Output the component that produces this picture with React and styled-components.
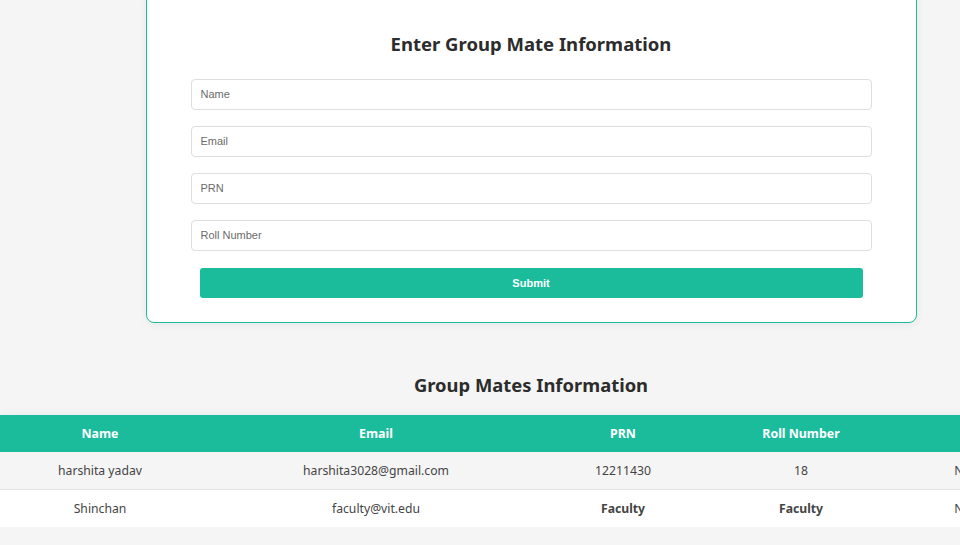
import React from "react";
import styled, { createGlobalStyle } from "styled-components";

const GlobalStyle = createGlobalStyle`
  html, body {
    margin: 0;
    padding: 0;
    background: #f5f5f5;
    overflow: hidden;
  }
  body {
    font-family: "Noto Sans", "Open Sans", sans-serif;
    color: #333;
  }
`;

const Page = styled.div`
  width: 1062px;
  margin-top: -10px;
  display: flex;
  flex-direction: column;
  align-items: center;
`;

const Card = styled.div`
  width: 771px;
  box-sizing: border-box;
  background: #fff;
  border: 1.5px solid #1abc9c;
  border-radius: 8px;
  box-shadow: 0 2px 8px rgba(0, 0, 0, 0.06);
  padding: 39px 44px 24px;
  display: flex;
  flex-direction: column;
  align-items: center;
`;

const Title = styled.h2`
  margin: 0 0 21px;
  font-size: 18.5px;
  font-weight: 700;
  color: #2c2c2c;
  line-height: 28px;
`;

const Form = styled.form`
  width: 100%;
  display: flex;
  flex-direction: column;
  gap: 16.5px;
`;

const Input = styled.input`
  height: 30.5px;
  box-sizing: border-box;
  width: 100%;
  border: 1px solid #dedede;
  border-radius: 4px;
  padding: 0 9px;
  font-family: "Liberation Sans", Arial, sans-serif;
  font-size: 11px;
  color: #333;
  background: #fff;
  outline: none;
  &::placeholder {
    color: #6b6b6b;
  }
`;

const Button = styled.button`
  margin: 1px 9px 0;
  height: 30px;
  border: none;
  border-radius: 3px;
  background: #1abc9c;
  color: #fff;
  font-family: "Liberation Sans", Arial, sans-serif;
  font-weight: 700;
  font-size: 11px;
  cursor: pointer;
`;

const SectionTitle = styled.h2`
  margin: 48px 0 16px;
  font-size: 18.4px;
  font-weight: 700;
  color: #2c2c2c;
  line-height: 28px;
`;

const Table = styled.table`
  width: 1062px;
  table-layout: fixed;
  border-collapse: collapse;
  box-shadow: 0 4px 12px rgba(0, 0, 0, 0.1);
`;

const Th = styled.th`
  background: #1abc9c;
  color: #fff;
  font-size: 12.4px;
  font-weight: 700;
  height: 37px;
  padding: 0 10px;
  text-align: center;
`;

const Row = styled.tr`
  background: ${(p) => (p.$alt ? "#f5f5f5" : "#fff")};
  border-bottom: 1px solid #e4e4e4;
  &:last-child {
    border-bottom: none;
  }
`;

const Td = styled.td`
  height: 37px;
  padding: 0 10px;
  text-align: center;
  font-size: 12.2px;
  color: #444;
  font-weight: ${(p) => (p.$bold ? 700 : 400)};
  white-space: nowrap;
`;

const columns = [
  { label: "Name", width: 200 },
  { label: "Email", width: 352 },
  { label: "PRN", width: 142 },
  { label: "Roll Number", width: 214 },
  { label: "Guide", width: 154 },
];

const mates = [
  { name: "harshita yadav", email: "harshita3028@gmail.com", prn: "12211430", roll: "18", guide: "Not Added" },
  { name: "Shinchan", email: "faculty@vit.edu", prn: "Faculty", roll: "Faculty", guide: "Not Added", faculty: true },
];

export default function App() {
  return (
    <>
      <GlobalStyle />
      <Page>
        <Card>
          <Title>Enter Group Mate Information</Title>
          <Form onSubmit={(e) => e.preventDefault()}>
            <Input placeholder="Name" />
            <Input placeholder="Email" />
            <Input placeholder="PRN" />
            <Input placeholder="Roll Number" />
            <Button type="submit">Submit</Button>
          </Form>
        </Card>
        <SectionTitle>Group Mates Information</SectionTitle>
        <Table>
          <colgroup>
            {columns.map((c) => (
              <col key={c.label} style={{ width: c.width }} />
            ))}
          </colgroup>
          <thead>
            <tr>
              {columns.map((c) => (
                <Th key={c.label}>{c.label}</Th>
              ))}
            </tr>
          </thead>
          <tbody>
            {mates.map((m, i) => (
              <Row key={m.email} $alt={i % 2 === 0}>
                <Td>{m.name}</Td>
                <Td>{m.email}</Td>
                <Td $bold={m.faculty}>{m.prn}</Td>
                <Td $bold={m.faculty}>{m.roll}</Td>
                <Td>{m.guide}</Td>
              </Row>
            ))}
          </tbody>
        </Table>
      </Page>
    </>
  );
}
